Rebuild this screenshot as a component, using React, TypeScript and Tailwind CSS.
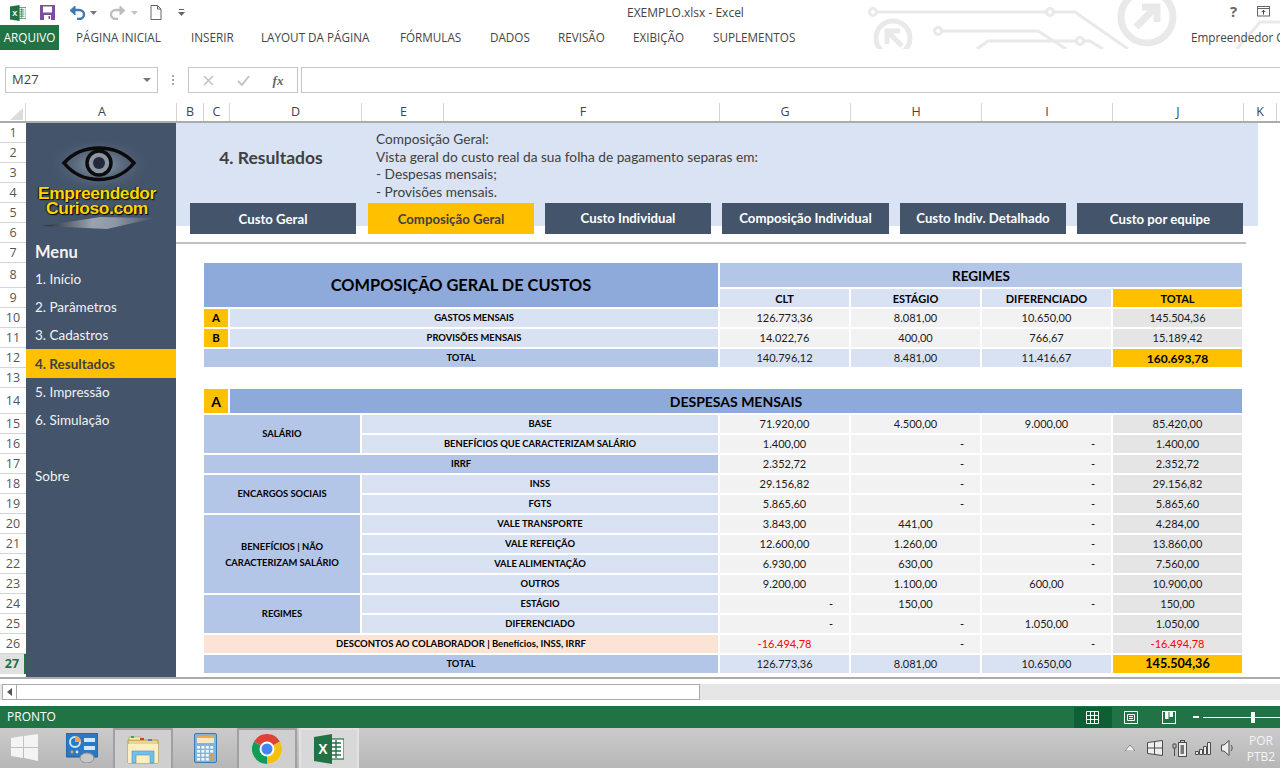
import React from "react";

const ROW_H: [string, string][] = [
  ["1", "h-[20px]"], ["2", "h-[20px]"], ["3", "h-[20px]"], ["4", "h-[20px]"], ["5", "h-[20px]"], ["6", "h-[20px]"], ["7", "h-[20px]"],
  ["8", "h-[25px]"], ["9", "h-[20px]"], ["10", "h-[20px]"], ["11", "h-[20px]"], ["12", "h-[20px]"], ["13", "h-[20px]"], ["14", "h-[26px]"],
  ["15", "h-[20px]"], ["16", "h-[20px]"], ["17", "h-[20px]"], ["18", "h-[20px]"], ["19", "h-[20px]"], ["20", "h-[20px]"], ["21", "h-[20px]"],
  ["22", "h-[20px]"], ["23", "h-[20px]"], ["24", "h-[20px]"], ["25", "h-[20px]"], ["26", "h-[20px]"],
];

const COLS: [string, string][] = [
  ["A", "w-[151px] pl-[2px]"], ["B", "w-[27px]"], ["C", "w-[26px]"], ["D", "w-[132px]"], ["E", "w-[82px] pl-[2px]"], ["F", "w-[276px] pl-[3px]"],
  ["G", "w-[131px]"], ["H", "w-[131px]"], ["I", "w-[131px]"], ["J", "w-[131px]"], ["K", "w-[33px]"],
];

const TABS: [string, string][] = [
  ["PÁGINA INICIAL", "w-[115px]"], ["INSERIR", "w-[70px]"], ["LAYOUT DA PÁGINA", "w-[139px]"], ["FÓRMULAS", "w-[90px]"],
  ["DADOS", "w-[68px]"], ["REVISÃO", "w-[75px]"], ["EXIBIÇÃO", "w-[80px]"], ["SUPLEMENTOS", "w-[90px]"],
];
const BUTTONS: [string, string][] = [
  ["Custo Geral", "w-[166px] pt-[2px]"], ["Composição Geral", "w-[166px] pt-[2px] ml-[1px]"], ["Custo Individual", "w-[166px]"],
  ["Composição Individual", "w-[167px] pt-[1px]"], ["Custo Indiv. Detalhado", "w-[166px] pt-[1px]"], ["Custo por equipe", "w-[166px] pt-[2px]"],
];

const cell = "flex items-center justify-center";
const lab = `${cell} pt-[1px] font-bold text-[9.4px] text-black`;

function Val({ v, cls = "bg-[#f2f2f2]", red = false }: { v: string; cls?: string; red?: boolean }) {
  if (v === "-")
    return <div className={`flex items-center justify-end pr-[16px] text-[11px] text-black ${cls}`}>-</div>;
  return <div className={`${cell} text-[11px] ${red ? "text-[#ff0000]" : "text-[#1a1a1a]"} ${cls}`}>{v}</div>;
}

function Vals({ a }: { a: string[] }) {
  return (
    <>
      <Val v={a[0]} />
      <Val v={a[1]} />
      <Val v={a[2]} />
      <Val v={a[3]} cls="bg-[#e5e5e5]" />
    </>
  );
}

function Circuit() {
  return (
    <svg className="absolute left-[860px] top-0" width="420" height="49" viewBox="860 0 420 49" fill="none" stroke="#e9e9e9" strokeWidth="3">
      <path d="M876 12H1047M1054 12H1075L1128 49" />
      <circle cx="873" cy="12" r="3.5" />
      <circle cx="1050" cy="12" r="3.5" />
      <path d="M941 31H1038L1066 49" />
      <circle cx="938" cy="31" r="3.5" />
      <path d="M977 49L988 41H1076M1084 41H1090L1103 49" />
      <circle cx="1080" cy="41" r="3.5" />
      <path d="M1237 49L1260 22H1280" />
      <circle cx="1147" cy="17" r="26" strokeWidth="7" />
      <path d="M1136 27L1155 8M1142 7H1157V22" strokeWidth="7" />
      <circle cx="893" cy="38" r="17" strokeWidth="5" />
      <path d="M902 46L888 32M887 44V31H900" strokeWidth="5" />
    </svg>
  );
}

function ExcelIcon({ s = 16 }: { s?: number }) {
  return (
    <svg width={s} height={s} viewBox="0 0 30 30">
      <rect x="15" y="5" width="15" height="20" fill="#fff" stroke="#217346" strokeWidth="1.2" />
      <path d="M18 9H27M18 13H27M18 17H27M18 21H27M22 6V24" stroke="#217346" strokeWidth="1.4" />
      <path d="M0 3L18 0V30L0 27Z" fill="#217346" />
      <text x="9" y="20" textAnchor="middle" fontSize="14" fontWeight="700" fill="#fff" fontFamily="Liberation Sans">X</text>
    </svg>
  );
}

function Logo() {
  return (
    <div className="relative h-[115px] w-[150px]">
      <svg className="absolute left-0 top-0" width="150" height="115" viewBox="26 123 150 115">
        <defs>
          <radialGradient id="glow" cx="50%" cy="50%" r="50%">
            <stop offset="0%" stopColor="#aab4c2" stopOpacity="0.8" />
            <stop offset="100%" stopColor="#44546a" stopOpacity="0" />
          </radialGradient>
          <linearGradient id="wedge" x1="0" x2="1" y1="0" y2="0">
            <stop offset="0%" stopColor="#1f2a3a" />
            <stop offset="45%" stopColor="#9aa3af" />
            <stop offset="65%" stopColor="#8d97a5" />
            <stop offset="100%" stopColor="#44546a" />
          </linearGradient>
        </defs>
        <ellipse cx="99" cy="165" rx="52" ry="28" fill="url(#glow)" />
        <path d="M64 163C82 143 116 143 134 163C116 185 82 185 64 163Z" fill="none" stroke="#0b0b0b" strokeWidth="3.5" />
        <circle cx="99" cy="163" r="12" fill="#8c95a3" stroke="#0b0b0b" strokeWidth="3.5" />
        <circle cx="99" cy="163" r="6" fill="#222a38" />
        <polygon points="42,226 107,229 155,218 100,217" fill="url(#wedge)" />
      </svg>
      <div className="absolute left-0 top-[63px] w-[150px] pr-[8px] text-center font-['Liberation_Sans',Arial,sans-serif] text-[17.4px] font-bold leading-[15px] tracking-[-0.4px] text-[#ffd500] [text-shadow:1px_1px_1px_#000,-1px_0_1px_#222]">
        <div>Empreendedor</div>
        <div>Curioso.com</div>
      </div>
    </div>
  );
}

function Sidebar() {
  const items = ["1. Início", "2. Parâmetros", "3. Cadastros"];
  const after = ["5. Impressão", "6. Simulação"];
  return (
    <div className="flex w-[150px] shrink-0 flex-col bg-[#44546a] text-[13.5px] text-[#f2f2f2]">
      <Logo />
      <div className="flex h-[27px] items-center pl-[9px] pt-[1px] text-[16.5px] font-bold">Menu</div>
      {items.map((t) => (
        <div key={t} className="flex h-[28px] items-center pl-[9px]">{t}</div>
      ))}
      <div className="flex h-[29px] items-center bg-[#ffc000] pl-[9px] pt-[1px] font-bold text-[#404040]">4. Resultados</div>
      {after.map((t) => (
        <div key={t} className="flex h-[28px] items-center pl-[9px]">{t}</div>
      ))}
      <div className="mt-[28px] flex h-[28px] items-center pl-[9px]">Sobre</div>
    </div>
  );
}

function Banner() {
  return (
    <div className="flex h-[103px] w-[1082px] flex-col bg-[#dae3f3] text-[#404040]">
      <div className="flex h-[80px] shrink-0">
        <div className="flex w-[190px] items-center justify-center pb-[10px] text-[17.5px] font-bold">4. Resultados</div>
        <div className="ml-[10px] pt-[7px] text-[13.7px] leading-[17.7px]">
          <div>Composição Geral:</div>
          <div>Vista geral do custo real da sua folha de pagamento separas em:</div>
          <div>- Despesas mensais;</div>
          <div>- Provisões mensais.</div>
        </div>
      </div>
      <div className="flex h-[31px] shrink-0 gap-[11px] pl-[14px]">
        {BUTTONS.map(([b, w], i) => (
          <div
            key={b}
            className={`flex h-[31px] items-center justify-center text-[13.2px] font-bold ${w} ${
              i === 1 ? "bg-[#ffc000] text-[#404040]" : "bg-[#44546a] text-white"
            }`}
          >
            {b}
          </div>
        ))}
      </div>
    </div>
  );
}

function TopTable() {
  const hdr = `${cell} pt-[2px] font-bold text-[11px] text-black`;
  return (
    <div className="grid grid-cols-[24px_130px_356px_129px_129px_129px_129px] gap-[2px] [grid-template-rows:24px_18px_18px_18px_18px]">
      <div className={`${cell} col-span-3 row-span-2 bg-[#8eaadb] pt-[1px] text-[16.4px] font-bold text-black`}>COMPOSIÇÃO GERAL DE CUSTOS</div>
      <div className={`${cell} col-span-4 bg-[#b4c6e7] pt-[2px] text-[13.5px] font-bold text-black`}>REGIMES</div>
      <div className={`${hdr} bg-[#d9e2f3]`}>CLT</div>
      <div className={`${hdr} bg-[#d9e2f3]`}>ESTÁGIO</div>
      <div className={`${hdr} bg-[#d9e2f3]`}>DIFERENCIADO</div>
      <div className={`${hdr} bg-[#ffc000]`}>TOTAL</div>

      <div className={`${cell} bg-[#ffc000] text-[11.5px] font-bold text-black`}>A</div>
      <div className={`${lab} col-span-2 bg-[#d9e2f3]`}>GASTOS MENSAIS</div>
      <Vals a={["126.773,36", "8.081,00", "10.650,00", "145.504,36"]} />

      <div className={`${cell} bg-[#ffc000] text-[11.5px] font-bold text-black`}>B</div>
      <div className={`${lab} col-span-2 bg-[#d9e2f3]`}>PROVISÕES MENSAIS</div>
      <Vals a={["14.022,76", "400,00", "766,67", "15.189,42"]} />

      <div className={`${lab} col-span-3 bg-[#b4c6e7]`}>TOTAL</div>
      <Val v="140.796,12" cls="bg-[#d9e2f3]" />
      <Val v="8.481,00" cls="bg-[#d9e2f3]" />
      <Val v="11.416,67" cls="bg-[#d9e2f3]" />
      <div className={`${cell} bg-[#ffc000] pt-[2px] text-[12px] font-bold text-black`}>160.693,78</div>
    </div>
  );
}

function DetailTable() {
  const g = `${lab} bg-[#b4c6e7]`;
  const s = `${lab} bg-[#d9e2f3]`;
  return (
    <div className="grid grid-cols-[24px_130px_356px_129px_129px_129px_129px] gap-[2px] [grid-template-rows:24px_repeat(13,18px)]">
      <div className={`${cell} bg-[#ffc000] text-[14px] font-bold text-black`}>A</div>
      <div className={`${cell} col-span-6 bg-[#8eaadb] text-[14px] font-bold text-black`}>DESPESAS MENSAIS</div>

      <div className={`${g} col-span-2 row-span-2`}>SALÁRIO</div>
      <div className={s}>BASE</div>
      <Vals a={["71.920,00", "4.500,00", "9.000,00", "85.420,00"]} />
      <div className={s}>BENEFÍCIOS QUE CARACTERIZAM SALÁRIO</div>
      <Vals a={["1.400,00", "-", "-", "1.400,00"]} />

      <div className={`${g} col-span-3`}>IRRF</div>
      <Vals a={["2.352,72", "-", "-", "2.352,72"]} />

      <div className={`${g} col-span-2 row-span-2`}>ENCARGOS SOCIAIS</div>
      <div className={s}>INSS</div>
      <Vals a={["29.156,82", "-", "-", "29.156,82"]} />
      <div className={s}>FGTS</div>
      <Vals a={["5.865,60", "-", "-", "5.865,60"]} />

      <div className={`${g} col-span-2 row-span-4 text-center leading-[16px]`}>
        BENEFÍCIOS | NÃO<br />CARACTERIZAM SALÁRIO
      </div>
      <div className={s}>VALE TRANSPORTE</div>
      <Vals a={["3.843,00", "441,00", "-", "4.284,00"]} />
      <div className={s}>VALE REFEIÇÃO</div>
      <Vals a={["12.600,00", "1.260,00", "-", "13.860,00"]} />
      <div className={s}>VALE ALIMENTAÇÃO</div>
      <Vals a={["6.930,00", "630,00", "-", "7.560,00"]} />
      <div className={s}>OUTROS</div>
      <Vals a={["9.200,00", "1.100,00", "600,00", "10.900,00"]} />

      <div className={`${g} col-span-2 row-span-2`}>REGIMES</div>
      <div className={s}>ESTÁGIO</div>
      <Vals a={["-", "150,00", "-", "150,00"]} />
      <div className={s}>DIFERENCIADO</div>
      <Vals a={["-", "-", "1.050,00", "1.050,00"]} />

      <div className={`${cell} col-span-3 bg-[#fbe4d5] pt-[1px] text-[9.5px] font-bold text-black`}>DESCONTOS AO COLABORADOR | Benefícios, INSS, IRRF</div>
      <Val v="-16.494,78" red />
      <Val v="-" />
      <Val v="-" />
      <Val v="-16.494,78" red cls="bg-[#e5e5e5]" />

      <div className={`${lab} col-span-3 bg-[#b4c6e7]`}>TOTAL</div>
      <Val v="126.773,36" cls="bg-[#d9e2f3]" />
      <Val v="8.081,00" cls="bg-[#d9e2f3]" />
      <Val v="10.650,00" cls="bg-[#d9e2f3]" />
      <div className={`${cell} bg-[#ffc000] pt-[1px] text-[12.6px] font-bold text-black`}>145.504,36</div>
    </div>
  );
}

function TitleBar() {
  return (
    <div className="relative z-10 flex h-[25px] items-center">
      <div className="ml-[10px]"><ExcelIcon s={16} /></div>
      <svg className="ml-[14px]" width="15" height="15" viewBox="0 0 15 15">
        <path d="M0 0H15V15H0Z" fill="#7e4e9e" />
        <rect x="3" y="1.5" width="9" height="6" fill="#fff" />
        <rect x="4" y="10" width="7" height="5" fill="#fff" />
        <rect x="8.5" y="11" width="1.5" height="3" fill="#7e4e9e" />
      </svg>
      <svg className="ml-[14px]" width="16" height="14" viewBox="0 0 16 14" fill="none">
        <path d="M4 4H10C13 4 15 6 15 8.5C15 11 13 13 10 13H8" stroke="#3e79b4" strokeWidth="2.4" />
        <path d="M6 0L1 4.5L6 9Z" fill="#3e79b4" stroke="#3e79b4" />
      </svg>
      <svg className="ml-[5px]" width="7" height="4" viewBox="0 0 7 4"><path d="M0 0H7L3.5 4Z" fill="#777" /></svg>
      <svg className="ml-[13px]" width="16" height="14" viewBox="0 0 16 14" fill="none">
        <path d="M12 4H6C3 4 1 6 1 8.5C1 11 3 13 6 13H8" stroke="#bdbdbd" strokeWidth="2.4" />
        <path d="M10 0L15 4.5L10 9Z" fill="#bdbdbd" stroke="#bdbdbd" />
      </svg>
      <svg className="ml-[5px]" width="7" height="4" viewBox="0 0 7 4"><path d="M0 0H7L3.5 4Z" fill="#c4c4c4" /></svg>
      <svg className="ml-[12px]" width="12" height="15" viewBox="0 0 12 15" fill="none">
        <path d="M1 .5H7.5L11 4V14.5H1Z" fill="#fff" stroke="#666" />
        <path d="M7.5 .5V4H11" stroke="#666" />
      </svg>
      <svg className="ml-[16px]" width="7" height="7" viewBox="0 0 7 7">
        <rect x="1" y="0" width="5" height="1" fill="#666" />
        <path d="M0 3H7L3.5 7Z" fill="#666" />
      </svg>
      <div className="absolute left-[627px] top-[5px] text-[12px] leading-[16px] text-[#444]">EXEMPLO.xlsx - Excel</div>
      <div className="absolute left-[1230px] top-[1px] text-[15px] font-bold leading-[20px] text-[#666]">?</div>
      <svg className="absolute left-[1257px] top-[6px]" width="13" height="11" viewBox="0 0 13 11" fill="none">
        <rect x=".5" y=".5" width="12" height="9.5" stroke="#666" />
        <path d="M1 2.5H12" stroke="#666" />
        <path d="M6.5 8.5V4.5M4.5 6.2L6.5 4.2L8.5 6.2" stroke="#444" />
      </svg>
    </div>
  );
}

function Ribbon() {
  return (
    <div className="relative z-10 flex h-[25px] items-center text-[11.7px] text-[#444]">
      <div className="flex h-[25px] w-[59px] items-center justify-center bg-[#217346] text-white">ARQUIVO</div>
      <div className="ml-[17px] flex">
        {TABS.map(([t, w]) => (
          <span key={t} className={`whitespace-nowrap ${w}`}>{t}</span>
        ))}
      </div>
      <span className="absolute left-[1191px] top-[4px] whitespace-nowrap">Empreendedor C</span>
    </div>
  );
}

function FormulaBar() {
  return (
    <div className="mt-[17px] flex h-[26px] items-stretch">
      <div className="ml-[5px] flex w-[153px] items-center justify-between border border-[#c6c6c6] pl-[6px] pr-[6px] text-[13px] text-[#444]">
        M27
        <svg width="8" height="4" viewBox="0 0 8 4"><path d="M0 0H8L4 4Z" fill="#777" /></svg>
      </div>
      <div className="flex w-[30px] flex-col items-center justify-center gap-[2px]">
        <i className="block h-[2px] w-[2px] bg-[#aaa]" />
        <i className="block h-[2px] w-[2px] bg-[#aaa]" />
        <i className="block h-[2px] w-[2px] bg-[#aaa]" />
      </div>
      <div className="flex w-[110px] items-center justify-around border border-[#c6c6c6] px-[2px]">
        <svg width="11" height="11" viewBox="0 0 11 11"><path d="M1 1L10 10M10 1L1 10" stroke="#c4c4c4" strokeWidth="1.6" /></svg>
        <svg width="13" height="11" viewBox="0 0 13 11" fill="none"><path d="M1 6L5 10L12 1" stroke="#c4c4c4" strokeWidth="2" /></svg>
        <span className="font-['Liberation_Serif',serif] text-[13px] font-bold italic leading-none text-[#666]">fx</span>
      </div>
      <div className="ml-[3px] flex-1 border-y border-l border-[#c6c6c6]" />
    </div>
  );
}

function ColHeaders() {
  return (
    <div className="mt-[10px] flex h-[20px] border-b-2 border-[#ababab] text-[12.5px] text-[#444]">
      <div className="relative w-[26px] shrink-0 border-r border-[#d4d4d4]">
        <svg className="absolute left-[10px] top-[5px]" width="13" height="12" viewBox="0 0 13 12"><path d="M13 0V12H0Z" fill="#dcdcdc" /></svg>
      </div>
      {COLS.map(([c, w]) => (
        <div key={c} className={`flex shrink-0 items-center justify-center border-r border-[#d4d4d4] ${w}`}>{c}</div>
      ))}
    </div>
  );
}

function RowHeaders() {
  return (
    <div className="flex w-[26px] shrink-0 flex-col font-['Open_Sans',sans-serif] text-[12.5px] text-[#555]">
      {ROW_H.map(([n, h]) => (
        <div key={n} className={`flex items-center justify-center border-b border-[#d4d4d4] pt-[1px] ${h}`}>{n}</div>
      ))}
      <div className="flex h-[20px] items-center justify-center border-r-2 border-[#217346] bg-[#e1e1e1] font-bold text-[#217346]">27</div>
    </div>
  );
}

function Sheet() {
  return (
    <div className="flex h-[556px] overflow-hidden border-b-2 border-[#ababab]">
      <RowHeaders />
      <Sidebar />
      <div className="flex flex-col">
        <Banner />
        <div className="mt-[16px] h-[2px] w-[1070px] bg-[#c0c0c0]" />
        <div className="ml-[28px] mt-[19px]">
          <TopTable />
          <div className="mt-[22px]"><DetailTable /></div>
        </div>
      </div>
    </div>
  );
}

function ScrollBar() {
  return (
    <div className="mt-[5px] flex h-[16px] bg-[#e6e6e6]">
      <div className="ml-[2px] flex w-[15px] items-center justify-center border border-[#ababab] bg-white">
        <svg width="5" height="8" viewBox="0 0 5 8"><path d="M5 0V8L0 4Z" fill="#555" /></svg>
      </div>
      <div className="w-[683px] border-y border-r border-[#ababab] bg-white" />
    </div>
  );
}

function StatusBar() {
  return (
    <div className="mt-[6px] flex h-[22px] items-center bg-[#217346] text-[12px] text-white">
      <span className="pl-[7px]">PRONTO</span>
      <div className="ml-auto flex h-[21px] w-[38px] items-center justify-center bg-[#0f5f35] pr-[1px]">
        <svg width="13" height="13" viewBox="0 0 13 13" fill="none" stroke="#fff"><path d="M.5 .5H12.5V12.5H.5ZM4.5 .5V12.5M8.5 .5V12.5M.5 4.5H12.5M.5 8.5H12.5" /></svg>
      </div>
      <div className="flex h-[21px] w-[38px] items-center justify-center">
        <svg width="14" height="13" viewBox="0 0 14 13" fill="none" stroke="#fff"><path d="M.5 .5H13.5V12.5H.5ZM3.5 3.5H10.5V9.5H3.5ZM5 5.5H9M5 7.5H9" /></svg>
      </div>
      <div className="flex h-[21px] w-[38px] items-center justify-center">
        <svg width="14" height="13" viewBox="0 0 14 13"><rect x=".5" y=".5" width="13" height="12" fill="none" stroke="#fff" /><path d="M3 1H6.5V8H3ZM7.5 1H11V6H7.5Z" fill="#fff" /></svg>
      </div>
      <div className="ml-[5px] flex h-[22px] w-[87px] items-center">
        <i className="block h-[2px] w-[6px] bg-white" />
        <div className="relative ml-[4px] h-[1px] flex-1 bg-white">
          <i className="absolute left-[48px] top-[-5px] block h-[11px] w-[4px] bg-white" />
        </div>
      </div>
    </div>
  );
}

function Taskbar() {
  const active = "flex h-[40px] items-center justify-center border-x-2 border-t-2 border-[#a0a0a0] bg-[#cfcfcf]";
  return (
    <div className="flex h-[40px] items-center bg-gradient-to-b from-[#cbcbcb] to-[#b7b7b7]">
      <div className="flex w-[50px] items-center pl-[11px]">
        <svg width="28" height="28" viewBox="11 734 28 28" fill="#f4f4f4">
          <path d="M11 738L23 736V747H11ZM24 736L38 734V747H24ZM11 748H23V758L11 756ZM24 748H38V761L24 758Z" />
        </svg>
      </div>
      <div className="flex w-[63px] items-center justify-center">
        <svg width="32" height="30" viewBox="0 0 32 30">
          <rect x="0" y="0" width="32" height="24" rx="1" fill="#2a79c4" stroke="#1c5a98" />
          <circle cx="9" cy="9" r="5" fill="none" stroke="#cfe6fb" strokeWidth="2" />
          <path d="M9 9V3A6 6 0 0 1 15 9Z" fill="#f5a33b" />
          <rect x="18" y="5" width="11" height="4" fill="#cfe6fb" />
          <rect x="18" y="13" width="11" height="4" fill="#cfe6fb" />
          <circle cx="6" cy="19" r="1.4" fill="#f5a33b" />
          <circle cx="11" cy="19" r="1.4" fill="#cfe6fb" />
          <ellipse cx="21" cy="25" rx="7" ry="5" fill="#c8c8c8" stroke="#8e8e8e" />
        </svg>
      </div>
      <div className={`${active} w-[60px]`}>
        <svg width="32" height="30" viewBox="0 0 32 30">
          <path d="M1 6H31V29H1Z" fill="#eed48a" stroke="#b49a50" />
          <path d="M2 3H14L16 6H2Z" fill="#f7e8b8" stroke="#b49a50" strokeWidth=".6" />
          <rect x="4" y="2" width="3" height="2" fill="#3aa84a" />
          <rect x="13" y="4" width="4" height="2" fill="#c8402f" />
          <rect x="21" y="5" width="4" height="2" fill="#3d8cd8" />
          <path d="M1 10H31V29H1Z" fill="#fbeec0" />
          <path d="M5 29V17H27V29H23V21H9V29Z" fill="#6fc1ea" stroke="#4c93c2" strokeWidth=".6" />
        </svg>
      </div>
      <div className="flex w-[64px] items-center justify-center">
        <svg width="23" height="30" viewBox="0 0 23 30">
          <rect x=".5" y=".5" width="22" height="29" rx="1.5" fill="#7fb5dd" stroke="#3d78ab" />
          <rect x="3" y="3" width="17" height="7" fill="#f4e7c3" />
          <rect x="3" y="3" width="17" height="2" fill="#eda94a" />
          {[0, 1, 2, 3].map((r) =>
            [0, 1, 2, 3].map((c) => (
              <rect key={`${r}-${c}`} x={3 + c * 4.4} y={13 + r * 4} width="3" height="2.6" fill={c === 3 && r > 1 ? "#ec9a35" : "#f4f8fb"} />
            ))
          )}
        </svg>
      </div>
      <div className={`${active} w-[60px]`}>
        <svg width="30" height="30" viewBox="-15 -15 30 30">
          <circle r="15" fill="#fff" />
          <path d="M0 0L-13 -7.5A15 15 0 0 1 13 -7.5Z" fill="#db4437" />
          <path d="M0 0L13 -7.5A15 15 0 0 1 0 15Z" fill="#f4c20d" />
          <path d="M0 0L0 15A15 15 0 0 1 -13 -7.5Z" fill="#0f9d58" />
          <circle r="7.5" fill="#fff" />
          <circle r="5.5" fill="#4285f4" />
        </svg>
      </div>
      <div className="ml-[2px] flex h-[40px] w-[60px] items-center justify-center border-x-2 border-t-2 border-[#e2e2e2] bg-[#d8d8d8]">
        <ExcelIcon s={30} />
      </div>
      <div className="ml-auto flex items-center text-[#555]">
        <svg width="10" height="6" viewBox="0 0 10 6" className="mr-[12px]"><path d="M0 6L5 0L10 6Z" fill="#f5f5f5" stroke="#555" strokeWidth=".6" /></svg>
        <svg width="16" height="16" viewBox="0 0 16 16" fill="none" stroke="#4c4c4c" className="mr-[9px]">
          <path d="M.5 2.5L15.5 .5V15.5L.5 13.5ZM7.5 1.5V14.5M.5 8H15.5" fill="#eee" />
        </svg>
        <svg width="15" height="17" viewBox="0 0 15 17" fill="none" stroke="#4c4c4c" className="mr-[8px]">
          <path d="M1 4V8H4V4ZM2.5 8V16" />
          <rect x="6.5" y="2.5" width="8" height="14" fill="#eee" />
          <rect x="8.5" y=".5" width="4" height="2" />
          <rect x="8.5" y="5" width="3.5" height="9" fill="#777" stroke="none" />
        </svg>
        <svg width="16" height="14" viewBox="0 0 16 14" className="mr-[10px]" fill="#eee" stroke="#4c4c4c">
          <path d="M.5 10.5H3.5V13.5H.5ZM4.5 8.5H7.5V13.5H4.5ZM8.5 5.5H11.5V13.5H8.5ZM12.5 1.5H15.5V13.5H12.5Z" />
        </svg>
        <svg width="13" height="16" viewBox="0 0 13 16" fill="#eee" stroke="#4c4c4c" className="mr-[12px]">
          <path d="M.5 5H3L8 .5V15.5L3 11H.5Z" />
          <path d="M10 5C11.5 7 11.5 9 10 11" fill="none" />
        </svg>
        <div className="mr-[4px] flex w-[30px] flex-col items-center pt-[1px] text-[12px] leading-[16px] text-[#f4f4f4]">
          <span>POR</span>
          <span>PTB2</span>
        </div>
      </div>
    </div>
  );
}

export default function App() {
  return (
    <div className="relative h-[768px] w-[1280px] overflow-hidden bg-white font-['Open_Sans',sans-serif]">
      <Circuit />
      <TitleBar />
      <Ribbon />
      <FormulaBar />
      <ColHeaders />
      <div className="font-['Lato',sans-serif]">
        <Sheet />
      </div>
      <ScrollBar />
      <StatusBar />
      <Taskbar />
    </div>
  );
}
